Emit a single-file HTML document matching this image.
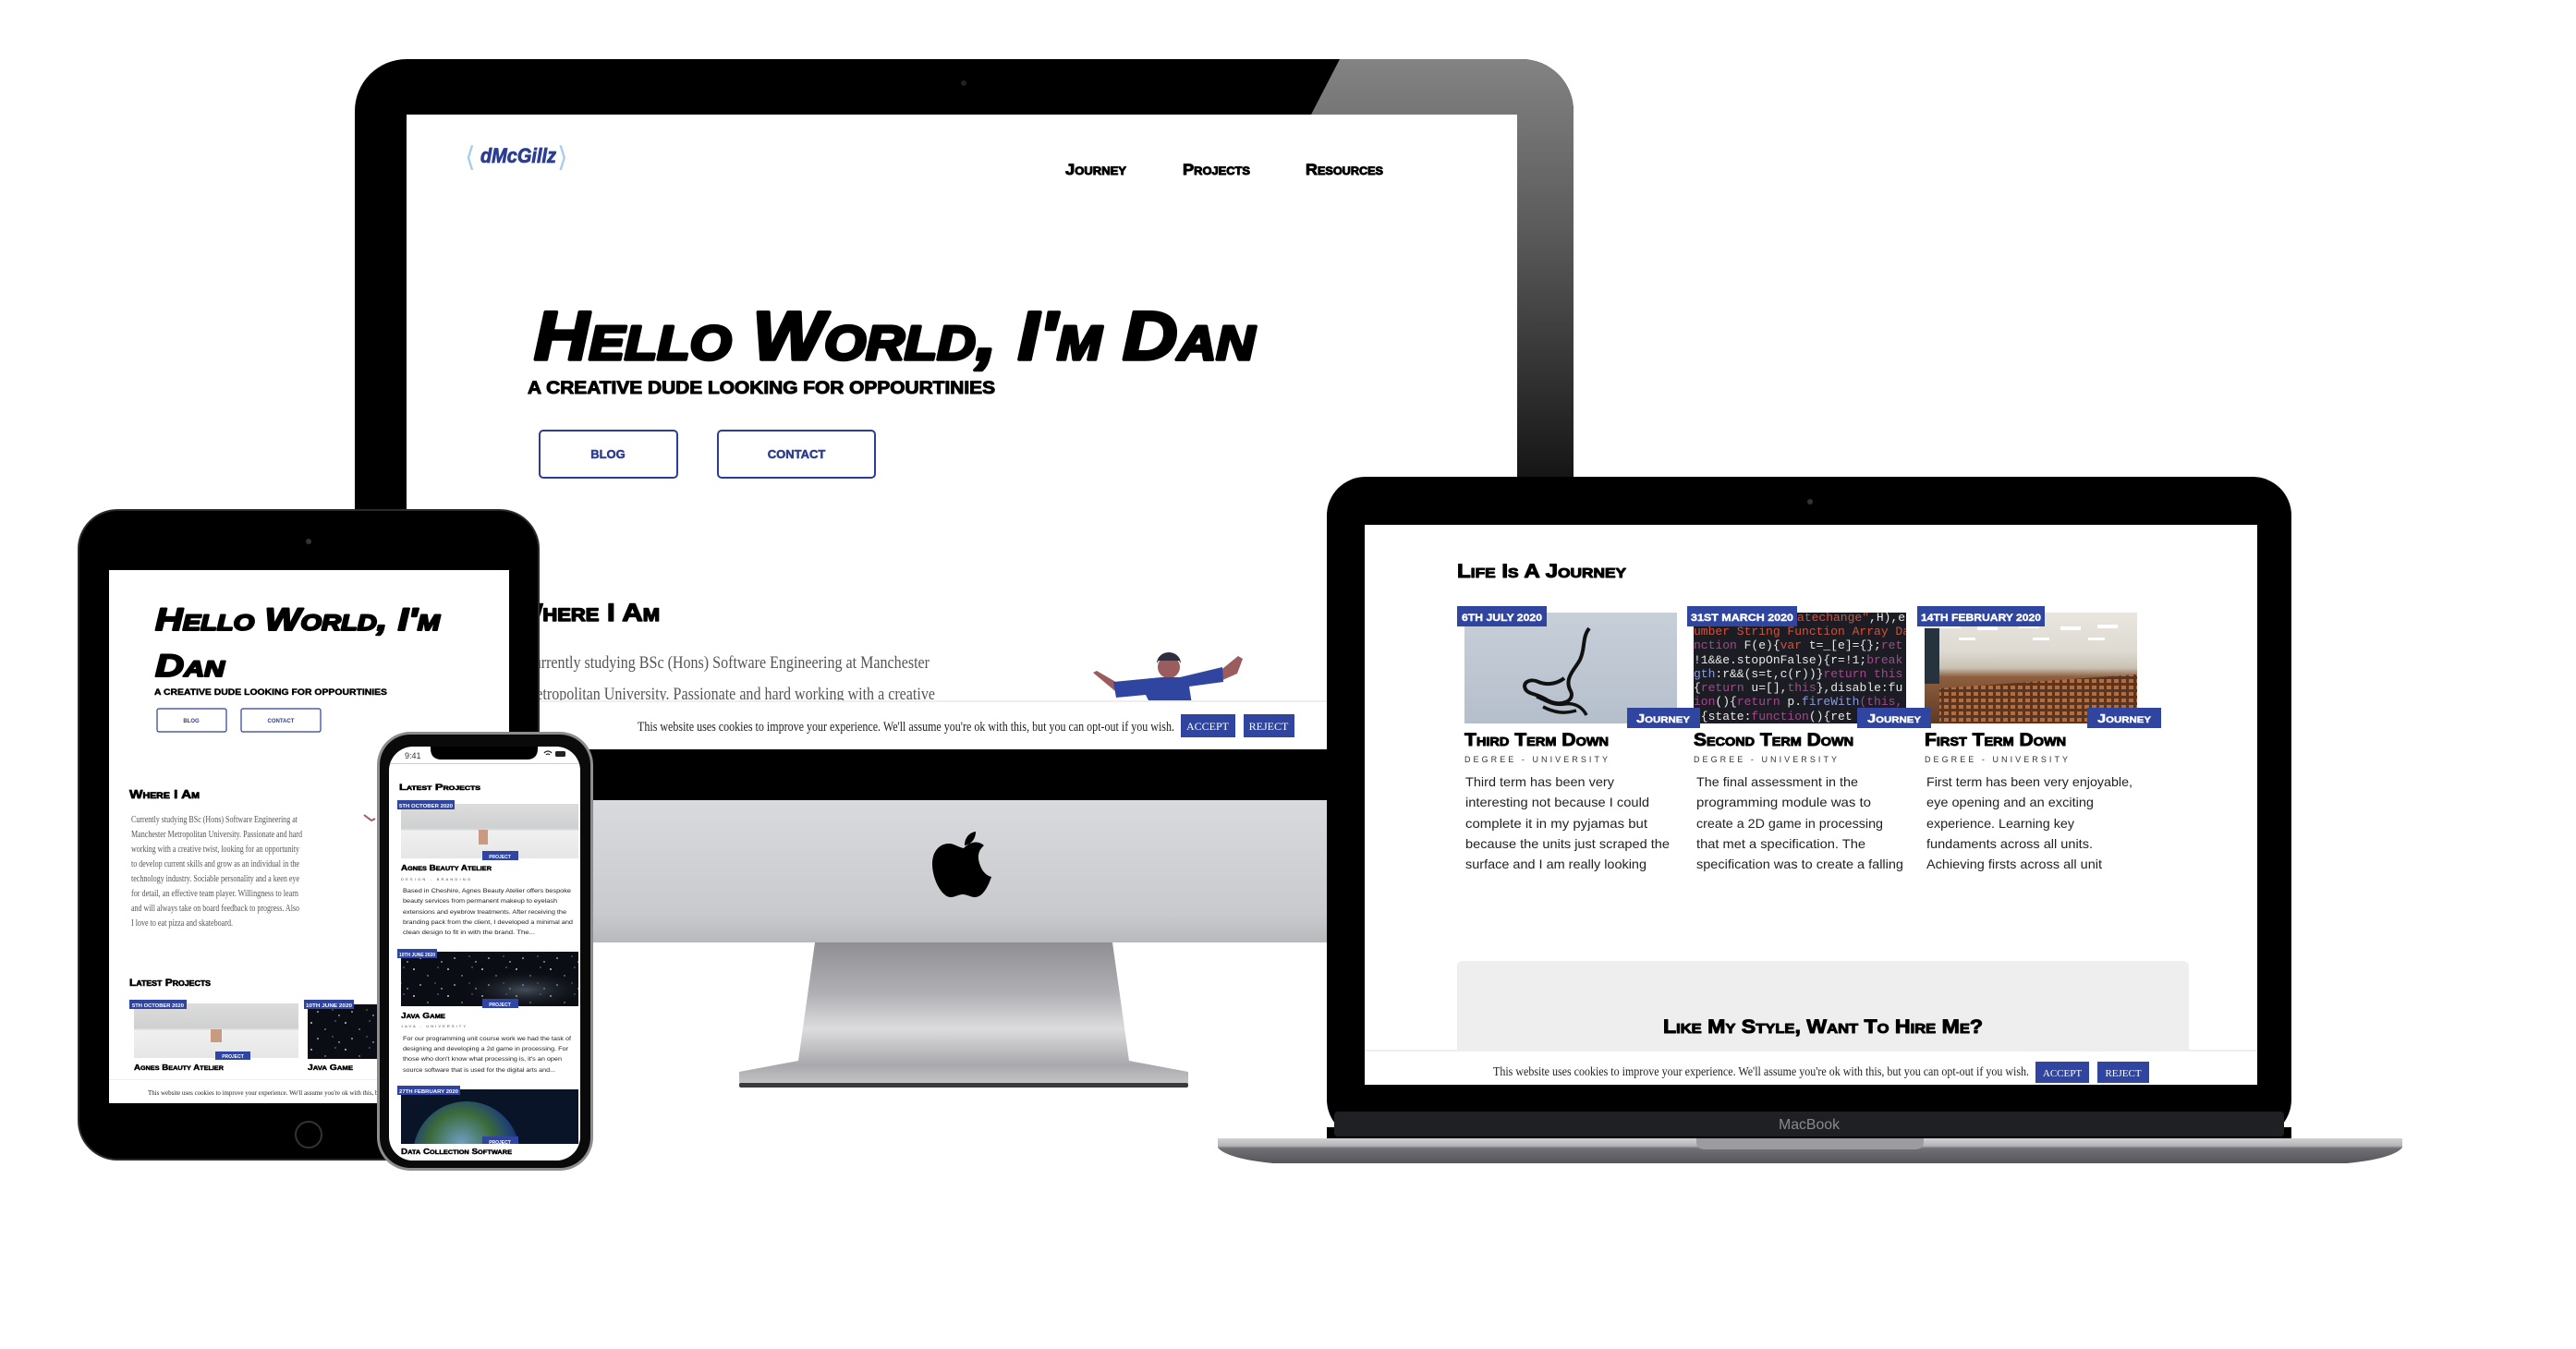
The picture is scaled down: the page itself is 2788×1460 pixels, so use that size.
<!DOCTYPE html>
<html><head><meta charset="utf-8"><style>
html,body{margin:0;padding:0;background:#fff;}
svg{display:block;}
text{font-family:"Liberation Sans",sans-serif;}
.h{font-weight:bold;font-variant:small-caps;}
.k{stroke:#000;stroke-linejoin:round;}
.w{stroke:#fff;stroke-width:0.4px;}
.serif{font-family:"Liberation Serif",serif;}
.mono{font-family:"Liberation Mono",monospace;}
</style></head><body>
<svg width="2788" height="1460" viewBox="0 0 2788 1460" xmlns="http://www.w3.org/2000/svg">
<defs>
  <linearGradient id="glare" gradientUnits="userSpaceOnUse" x1="0" y1="64" x2="0" y2="600">
    <stop offset="0" stop-color="#838383"/><stop offset="0.35" stop-color="#5a5a5a"/><stop offset="1" stop-color="#000"/>
  </linearGradient>
  <linearGradient id="chin" x1="0" y1="0" x2="0" y2="1">
    <stop offset="0" stop-color="#d9dadd"/><stop offset="0.8" stop-color="#c9cacd"/><stop offset="1" stop-color="#b8b9bc"/>
  </linearGradient>
  <linearGradient id="stand" x1="0" y1="0" x2="0" y2="1">
    <stop offset="0" stop-color="#8f8f94"/><stop offset="0.35" stop-color="#b0b0b4"/><stop offset="0.6" stop-color="#dcdcde"/><stop offset="0.85" stop-color="#a9a9ad"/><stop offset="1" stop-color="#c8c8ca"/>
  </linearGradient>
  <linearGradient id="base" x1="0" y1="0" x2="0" y2="1">
    <stop offset="0" stop-color="#d2d2d5"/><stop offset="0.3" stop-color="#b4b4b8"/><stop offset="0.4" stop-color="#707075"/><stop offset="1" stop-color="#55555a"/>
  </linearGradient>
  <linearGradient id="wall" x1="0" y1="0" x2="0" y2="1">
    <stop offset="0" stop-color="#c7cfd9"/><stop offset="1" stop-color="#b5bfcb"/>
  </linearGradient>
  <linearGradient id="hall" x1="0" y1="0" x2="0" y2="1">
    <stop offset="0" stop-color="#e9e6df"/><stop offset="0.35" stop-color="#dedad2"/><stop offset="0.5" stop-color="#c9c2b4"/><stop offset="0.58" stop-color="#8e5f3e"/><stop offset="1" stop-color="#5e3a24"/>
  </linearGradient>
  <linearGradient id="room" x1="0" y1="0" x2="0" y2="1">
    <stop offset="0" stop-color="#dcdcdc"/><stop offset="0.45" stop-color="#cfd0d1"/><stop offset="0.5" stop-color="#f0f0f0"/><stop offset="1" stop-color="#e6e6e6"/>
  </linearGradient>
  <pattern id="stars" width="37" height="29" patternUnits="userSpaceOnUse">
    <rect width="37" height="29" fill="#0b0d14"/>
    <circle cx="4" cy="5" r="0.9" fill="#fff"/><circle cx="19" cy="12" r="0.7" fill="#e9c98a"/>
    <circle cx="30" cy="3" r="0.6" fill="#9fc4ff"/><circle cx="11" cy="22" r="0.8" fill="#fff"/>
    <circle cx="27" cy="20" r="0.6" fill="#f0a060"/><circle cx="34" cy="26" r="0.7" fill="#fff"/>
  </pattern>
  <pattern id="seats" width="8" height="7" patternUnits="userSpaceOnUse">
    <rect width="8" height="7" fill="#5a3522"/><rect width="5" height="4" fill="#b06e42"/>
  </pattern>
  <radialGradient id="earth" cx="0.45" cy="0.4" r="0.6">
    <stop offset="0" stop-color="#6fa0c8"/><stop offset="0.5" stop-color="#3b6b3a"/><stop offset="0.8" stop-color="#1d3e78"/><stop offset="1" stop-color="#0c1b3c"/>
  </radialGradient>
  <radialGradient id="neb" cx="0.7" cy="0.7" r="0.4">
    <stop offset="0" stop-color="#6a7a8a" stop-opacity="0.6"/><stop offset="1" stop-color="#000" stop-opacity="0"/>
  </radialGradient>
  <clipPath id="imacClip"><rect x="384" y="64" width="1319" height="802" rx="56"/></clipPath>
  <clipPath id="imacScreen"><rect x="440" y="124" width="1202" height="687"/></clipPath>
  <clipPath id="lapScreen"><rect x="1477" y="568" width="966" height="606"/></clipPath>
  <clipPath id="tabScreen"><rect x="118" y="617" width="433" height="577"/></clipPath>
  <clipPath id="phScreen"><rect x="421" y="808" width="207" height="448" rx="26"/></clipPath>
  <clipPath id="c2"><rect x="1833" y="663" width="230" height="120"/></clipPath>
  <clipPath id="c3"><rect x="2083" y="663" width="230" height="120"/></clipPath>
</defs>

<!-- ================= iMAC ================= -->
<g clip-path="url(#imacClip)">
  <rect x="384" y="64" width="1319" height="802" fill="#000"/>
  <polygon points="1450,64 1703,64 1703,866 1642,866 1642,124 1419,124" fill="url(#glare)"/>
</g>
<circle cx="1043" cy="90" r="3" fill="#222"/>
<rect x="384" y="866" width="1319" height="154" fill="url(#chin)"/>
<path d="M1043,918 c8,-8 16,-8 22,-3 c-6,5 -8,12 -4,22 c3,8 8,11 12,12 c-4,12 -10,22 -18,22 c-5,0 -8,-3 -13,-3 c-5,0 -8,3 -13,3 c-10,0 -20,-20 -20,-36 c0,-14 8,-22 18,-22 c6,0 10,4 16,5 z M1044,915 c0,-8 5,-14 12,-15 c0,8 -5,14 -12,15 z" fill="#000"/>
<polygon points="882,1020 1204,1020 1222,1148 1286,1160 1286,1176 800,1176 800,1160 864,1148" fill="url(#stand)"/>
<rect x="800" y="1172" width="486" height="5" rx="2" fill="#3a3a3c"/>

<rect x="440" y="124" width="1202" height="687" fill="#fff"/>
<g clip-path="url(#imacScreen)">
  <text x="503" y="180" font-size="30" fill="#a9cdef">&#10216;</text>
  <text x="520" y="176" font-size="22" font-weight="bold" font-style="italic" fill="#2b3d94" stroke="#2b3d94" stroke-width="0.8" textLength="82" lengthAdjust="spacingAndGlyphs">dMcGillz</text>
  <text x="603" y="180" font-size="30" fill="#a9cdef">&#10217;</text>
  <text class="h k" stroke-width="0.9" x="1153" y="189" font-size="17" textLength="66" lengthAdjust="spacingAndGlyphs">Journey</text>
  <text class="h k" stroke-width="0.9" x="1280" y="189" font-size="17" textLength="73" lengthAdjust="spacingAndGlyphs">Projects</text>
  <text class="h k" stroke-width="0.9" x="1413" y="189" font-size="17" textLength="84" lengthAdjust="spacingAndGlyphs">Resources</text>
  <text class="h k" stroke-width="3.5" x="578" y="389" font-size="74" font-style="italic" textLength="780" lengthAdjust="spacingAndGlyphs">Hello World, I'm Dan</text>
  <text class="k" stroke-width="1" x="571" y="426" font-size="19" font-weight="bold" textLength="506" lengthAdjust="spacingAndGlyphs">A CREATIVE DUDE LOOKING FOR OPPOURTINIES</text>
  <rect x="584" y="466" width="149" height="51" rx="4" fill="none" stroke="#2b3d94" stroke-width="2"/>
  <text x="658" y="496" font-size="13" font-weight="bold" fill="#2b3d94" stroke="#2b3d94" stroke-width="0.5" text-anchor="middle">BLOG</text>
  <rect x="777" y="466" width="170" height="51" rx="4" fill="none" stroke="#2b3d94" stroke-width="2"/>
  <text x="862" y="496" font-size="13" font-weight="bold" fill="#2b3d94" stroke="#2b3d94" stroke-width="0.5" text-anchor="middle">CONTACT</text>
  <text class="h k" stroke-width="1.4" x="558" y="672" font-size="27" textLength="156" lengthAdjust="spacingAndGlyphs">Where I Am</text>
  <text class="serif" x="567" y="723" font-size="19" fill="#555" textLength="439" lengthAdjust="spacingAndGlyphs">Currently studying BSc (Hons) Software Engineering at Manchester</text>
  <text class="serif" x="566" y="757" font-size="19" fill="#555" textLength="446" lengthAdjust="spacingAndGlyphs">Metropolitan University. Passionate and hard working with a creative</text>
  <path d="M1183,728 l4,-2 l24,14 l-4,8 z" fill="#9a5c5c"/>
  <path d="M1318,728 l22,-18 l5,3 l-6,16 l-18,8 z" fill="#9a5c5c"/>
  <circle cx="1265" cy="722" r="12" fill="#9a5c5c"/>
  <path d="M1252,718 a13,12 0 0 1 26,0 l-2,-3 l-22,0 z" fill="#2e2e3e"/>
  <polygon points="1205,738 1257,733 1277,733 1323,722 1324,738 1287,743 1290,762 1245,762 1240,752 1208,755" fill="#2f45a0"/>
  <rect x="440" y="759" width="1202" height="52" fill="#fff"/>
  <rect x="440" y="758" width="1202" height="2" fill="#eee"/>
  <text class="serif" x="690" y="791" font-size="15" fill="#222" textLength="581" lengthAdjust="spacingAndGlyphs">This website uses cookies to improve your experience. We'll assume you're ok with this, but you can opt-out if you wish.</text>
  <rect x="1278" y="773" width="59" height="25" fill="#2f45a0"/>
  <text class="serif" x="1307" y="790" font-size="12" fill="#fff" text-anchor="middle">ACCEPT</text>
  <rect x="1346" y="773" width="55" height="25" fill="#2f45a0"/>
  <text class="serif" x="1373" y="790" font-size="12" fill="#fff" text-anchor="middle">REJECT</text>
</g>

<!-- ================= LAPTOP ================= -->
<path d="M1318,1232 L2600,1232 L2600,1242 Q2590,1254 2540,1259 L1378,1259 Q1328,1254 1318,1242 Z" fill="url(#base)"/>
<path d="M1836,1232 h246 v4 q0,8 -10,8 h-226 q-10,0 -10,-8 z" fill="#9c9ca0"/>
<rect x="1436" y="516" width="1044" height="716" rx="42" fill="#000"/>
<rect x="1436" y="1220" width="1044" height="12" fill="#000"/>
<rect x="1444" y="1203" width="1028" height="27" rx="4" fill="#1f2024"/>
<text x="1958" y="1222" font-size="16" fill="#8a8a8e" text-anchor="middle" textLength="66" lengthAdjust="spacingAndGlyphs">MacBook</text>
<circle cx="1959" cy="543" r="3" fill="#333"/>
<rect x="1477" y="568" width="966" height="606" fill="#fff"/>
<g clip-path="url(#lapScreen)">
  <text class="h k" stroke-width="1" x="1577" y="625" font-size="21" textLength="183" lengthAdjust="spacingAndGlyphs">Life Is A Journey</text>
  <rect x="1585" y="663" width="230" height="120" fill="url(#wall)"/>
  <path d="M1720,680 c-8,10 -4,22 -10,34 c-5,10 -18,20 -10,34 c5,10 -10,18 -25,10 c-12,-8 -20,-6 -24,-12 c-4,-8 6,-12 14,-8 c10,4 20,2 28,-4" fill="none" stroke="#111" stroke-width="4"/>
  <path d="M1663,754 c10,4 18,10 30,8 c12,-2 20,4 24,12 M1670,765 c12,6 22,8 36,4" fill="none" stroke="#111" stroke-width="3.5"/>
  <rect x="1833" y="663" width="230" height="120" fill="#1c1d24"/>
  <g clip-path="url(#c2)" font-size="13">
    <text x="1945" y="672" class="mono" fill="#d0523a">atechange"<tspan fill="#e8e8e8">,H),e.</tspan></text>
    <text x="1833" y="687" class="mono" fill="#d0523a">umber String Function Array Da</text>
    <text x="1833" y="702" class="mono" fill="#a04a8a">nction <tspan fill="#e8e8e8">F(e){</tspan><tspan fill="#d0523a">var</tspan><tspan fill="#e8e8e8"> t=_[e]={};</tspan>ret</text>
    <text x="1833" y="718" class="mono" fill="#e8e8e8">!1&amp;&amp;e.stopOnFalse){r=!1;<tspan fill="#a04a8a">break</tspan></text>
    <text x="1833" y="733" class="mono" fill="#8a9ad8">gth<tspan fill="#e8e8e8">:r&amp;&amp;(s=t,c(r))}</tspan><tspan fill="#a04a8a">return this</tspan></text>
    <text x="1833" y="748" class="mono" fill="#e8e8e8">{<tspan fill="#a04a8a">return</tspan> u=[],<tspan fill="#a04a8a">this</tspan>},disable:fu</text>
    <text x="1833" y="763" class="mono" fill="#a04a8a">ion<tspan fill="#e8e8e8">(){</tspan>return<tspan fill="#e8e8e8"> p.</tspan><tspan fill="#8a9ad8">fireWith</tspan>(this,</text>
    <text x="1833" y="779" class="mono" fill="#e8e8e8">={state:<tspan fill="#a04a8a">function</tspan>(){ret</text>
  </g>
  <g clip-path="url(#c3)">
  <rect x="2083" y="663" width="230" height="120" fill="url(#hall)"/>
  <g fill="#fff"><rect x="2100" y="676" width="22" height="4"/><rect x="2140" y="678" width="22" height="4"/><rect x="2185" y="676" width="22" height="4"/><rect x="2230" y="678" width="22" height="4"/><rect x="2270" y="676" width="22" height="4"/><rect x="2120" y="690" width="18" height="3"/><rect x="2200" y="690" width="18" height="3"/><rect x="2260" y="690" width="18" height="3"/></g>
  <rect x="2083" y="680" width="16" height="60" fill="#26323e"/>
  <polygon points="2099,745 2313,730 2313,783 2099,783" fill="url(#seats)"/>
  </g>
  <rect x="1577" y="656" width="97" height="22" fill="#2f45a0"/>
  <text class="w" x="1582" y="672" font-size="11" font-weight="bold" fill="#fff" textLength="87" lengthAdjust="spacingAndGlyphs">6TH JULY 2020</text>
  <rect x="1826" y="656" width="119" height="22" fill="#2f45a0"/>
  <text class="w" x="1830" y="672" font-size="11" font-weight="bold" fill="#fff" textLength="111" lengthAdjust="spacingAndGlyphs">31ST MARCH 2020</text>
  <rect x="2075" y="656" width="138" height="22" fill="#2f45a0"/>
  <text class="w" x="2079" y="672" font-size="11" font-weight="bold" fill="#fff" textLength="130" lengthAdjust="spacingAndGlyphs">14TH FEBRUARY 2020</text>
  <rect x="1761" y="766" width="79" height="22" fill="#2f45a0"/>
  <text class="h w" x="1800" y="782" font-size="13" fill="#fff" text-anchor="middle" textLength="58" lengthAdjust="spacingAndGlyphs">Journey</text>
  <rect x="2010" y="766" width="80" height="22" fill="#2f45a0"/>
  <text class="h w" x="2050" y="782" font-size="13" fill="#fff" text-anchor="middle" textLength="58" lengthAdjust="spacingAndGlyphs">Journey</text>
  <rect x="2259" y="766" width="80" height="22" fill="#2f45a0"/>
  <text class="h w" x="2299" y="782" font-size="13" fill="#fff" text-anchor="middle" textLength="58" lengthAdjust="spacingAndGlyphs">Journey</text>
  <text class="h k" stroke-width="0.9" x="1585" y="807" font-size="19" textLength="156" lengthAdjust="spacingAndGlyphs">Third Term Down</text>
  <text class="h k" stroke-width="0.9" x="1833" y="807" font-size="19" textLength="173" lengthAdjust="spacingAndGlyphs">Second Term Down</text>
  <text class="h k" stroke-width="0.9" x="2083" y="807" font-size="19" textLength="153" lengthAdjust="spacingAndGlyphs">First Term Down</text>
  <g font-size="9" fill="#333">
    <text x="1585" y="825" textLength="155" lengthAdjust="spacing">DEGREE - UNIVERSITY</text>
    <text x="1833" y="825" textLength="155" lengthAdjust="spacing">DEGREE - UNIVERSITY</text>
    <text x="2083" y="825" textLength="155" lengthAdjust="spacing">DEGREE - UNIVERSITY</text>
  </g>
  <g font-size="14" fill="#222">
    <text x="1586" y="851" textLength="161" lengthAdjust="spacingAndGlyphs">Third term has been very</text>
    <text x="1586" y="873" textLength="199" lengthAdjust="spacingAndGlyphs">interesting not because I could</text>
    <text x="1586" y="896" textLength="197" lengthAdjust="spacingAndGlyphs">complete it in my pyjamas but</text>
    <text x="1586" y="918" textLength="221" lengthAdjust="spacingAndGlyphs">because the units just scraped the</text>
    <text x="1586" y="940" textLength="196" lengthAdjust="spacingAndGlyphs">surface and I am really looking</text>
    <text x="1836" y="851" textLength="175" lengthAdjust="spacingAndGlyphs">The final assessment in the</text>
    <text x="1836" y="873" textLength="189" lengthAdjust="spacingAndGlyphs">programming module was to</text>
    <text x="1836" y="896" textLength="202" lengthAdjust="spacingAndGlyphs">create a 2D game in processing</text>
    <text x="1836" y="918" textLength="183" lengthAdjust="spacingAndGlyphs">that met a specification. The</text>
    <text x="1836" y="940" textLength="224" lengthAdjust="spacingAndGlyphs">specification was to create a falling</text>
    <text x="2085" y="851" textLength="223" lengthAdjust="spacingAndGlyphs">First term has been very enjoyable,</text>
    <text x="2085" y="873" textLength="181" lengthAdjust="spacingAndGlyphs">eye opening and an exciting</text>
    <text x="2085" y="896" textLength="160" lengthAdjust="spacingAndGlyphs">experience. Learning key</text>
    <text x="2085" y="918" textLength="180" lengthAdjust="spacingAndGlyphs">fundaments across all units.</text>
    <text x="2085" y="940" textLength="190" lengthAdjust="spacingAndGlyphs">Achieving firsts across all unit</text>
  </g>
  <rect x="1577" y="1040" width="792" height="110" rx="6" fill="#eeeeee"/>
  <text class="h k" stroke-width="1" x="1800" y="1118" font-size="21" textLength="346" lengthAdjust="spacingAndGlyphs">Like My Style, Want To Hire Me?</text>
  <rect x="1477" y="1137" width="966" height="37" fill="#fff"/>
  <rect x="1477" y="1136" width="966" height="2" fill="#eee"/>
  <text class="serif" x="1616" y="1164" font-size="14" fill="#222" textLength="580" lengthAdjust="spacingAndGlyphs">This website uses cookies to improve your experience. We'll assume you're ok with this, but you can opt-out if you wish.</text>
  <rect x="2203" y="1149" width="58" height="23" fill="#2f45a0"/>
  <text class="serif" x="2232" y="1165" font-size="11" fill="#fff" text-anchor="middle">ACCEPT</text>
  <rect x="2270" y="1149" width="56" height="23" fill="#2f45a0"/>
  <text class="serif" x="2298" y="1165" font-size="11" fill="#fff" text-anchor="middle">REJECT</text>
</g>

<!-- ================= TABLET ================= -->
<rect x="85" y="552" width="498" height="703" rx="42" fill="#000" stroke="#2a2a2a" stroke-width="2"/>
<circle cx="334" cy="586" r="3" fill="#333"/>
<circle cx="334" cy="1228" r="14" fill="none" stroke="#333" stroke-width="2"/>
<rect x="118" y="617" width="433" height="577" fill="#fff"/>
<g clip-path="url(#tabScreen)">
  <text class="h k" stroke-width="2" x="168" y="682" font-size="34" font-style="italic" textLength="308" lengthAdjust="spacingAndGlyphs">Hello World, I'm</text>
  <text class="h k" stroke-width="2" x="168" y="732" font-size="34" font-style="italic" textLength="75" lengthAdjust="spacingAndGlyphs">Dan</text>
  <text class="k" stroke-width="0.4" x="167" y="752" font-size="9" font-weight="bold" textLength="252" lengthAdjust="spacingAndGlyphs">A CREATIVE DUDE LOOKING FOR OPPOURTINIES</text>
  <rect x="170" y="767" width="75" height="25" rx="2" fill="none" stroke="#2b3d94" stroke-width="1.2"/>
  <text x="207" y="782" font-size="6" font-weight="bold" fill="#2b3d94" text-anchor="middle">BLOG</text>
  <rect x="261" y="767" width="86" height="25" rx="2" fill="none" stroke="#2b3d94" stroke-width="1.2"/>
  <text x="304" y="782" font-size="6" font-weight="bold" fill="#2b3d94" text-anchor="middle">CONTACT</text>
  <text class="h k" stroke-width="0.7" x="140" y="864" font-size="13" textLength="76" lengthAdjust="spacingAndGlyphs">Where I Am</text>
  <g font-size="10" fill="#555">
    <text class="serif" x="142" y="890" textLength="180" lengthAdjust="spacingAndGlyphs">Currently studying BSc (Hons) Software Engineering at</text>
    <text class="serif" x="142" y="906" textLength="185" lengthAdjust="spacingAndGlyphs">Manchester Metropolitan University. Passionate and hard</text>
    <text class="serif" x="142" y="922" textLength="182" lengthAdjust="spacingAndGlyphs">working with a creative twist, looking for an opportunity</text>
    <text class="serif" x="142" y="938" textLength="182" lengthAdjust="spacingAndGlyphs">to develop current skills and grow as an individual in the</text>
    <text class="serif" x="142" y="954" textLength="182" lengthAdjust="spacingAndGlyphs">technology industry. Sociable personality and a keen eye</text>
    <text class="serif" x="142" y="970" textLength="181" lengthAdjust="spacingAndGlyphs">for detail, an effective team player. Willingness to learn</text>
    <text class="serif" x="142" y="986" textLength="182" lengthAdjust="spacingAndGlyphs">and will always take on board feedback to progress. Also</text>
    <text class="serif" x="142" y="1002" textLength="110" lengthAdjust="spacingAndGlyphs">I love to eat pizza and skateboard.</text>
  </g>
  <path d="M394,882 l8,6 l4,-2" stroke="#9a5c5c" stroke-width="2" fill="none"/>
  <text class="h k" stroke-width="0.6" x="140" y="1067" font-size="11" textLength="88" lengthAdjust="spacingAndGlyphs">Latest Projects</text>
  <rect x="145" y="1086" width="178" height="59" fill="url(#room)"/>
  <rect x="228" y="1114" width="12" height="14" fill="#c89a80"/>
  <rect x="140" y="1082" width="62" height="10" fill="#2f45a0"/>
  <text x="143" y="1090" font-size="5.5" font-weight="bold" fill="#fff" textLength="56" lengthAdjust="spacingAndGlyphs">5TH OCTOBER 2020</text>
  <rect x="233" y="1138" width="38" height="9" fill="#2f45a0"/>
  <text x="252" y="1145" font-size="5" font-weight="bold" fill="#fff" text-anchor="middle">PROJECT</text>
  <rect x="333" y="1087" width="100" height="59" fill="url(#stars)"/>
  <rect x="329" y="1082" width="54" height="10" fill="#2f45a0"/>
  <text x="331" y="1090" font-size="5.5" font-weight="bold" fill="#fff" textLength="50" lengthAdjust="spacingAndGlyphs">10TH JUNE 2020</text>
  <text class="h k" stroke-width="0.4" x="145" y="1158" font-size="8" textLength="97" lengthAdjust="spacingAndGlyphs">Agnes Beauty Atelier</text>
  <text class="h k" stroke-width="0.4" x="333" y="1158" font-size="8" textLength="49" lengthAdjust="spacingAndGlyphs">Java Game</text>
  <rect x="118" y="1169" width="433" height="25" fill="#fff"/>
  <rect x="118" y="1168" width="433" height="1" fill="#eee"/>
  <text class="serif" x="160" y="1185" font-size="7" fill="#222" textLength="300" lengthAdjust="spacingAndGlyphs">This website uses cookies to improve your experience. We'll assume you're ok with this, but you can opt-out</text>
</g>

<!-- ================= PHONE ================= -->
<rect x="408" y="792" width="234" height="475" rx="36" fill="#8d8d90"/>
<rect x="411" y="795" width="228" height="469" rx="33" fill="#0a0a0a"/>
<rect x="421" y="808" width="207" height="448" rx="26" fill="#fff"/>
<g clip-path="url(#phScreen)">
  <path d="M466,808 h116 v2 q0,12 -12,12 h-92 q-12,0 -12,-12 z" fill="#000"/>
  <text x="438" y="821" font-size="9" fill="#333">9:41</text>
  <path d="M589,815 a5,5 0 0 1 8,0 M591,817 a2.5,2.5 0 0 1 4,0" stroke="#222" stroke-width="1.3" fill="none"/>
  <rect x="601" y="813" width="11" height="6" rx="1.5" fill="#222"/>
  <rect x="421" y="826" width="207" height="1" fill="#ccc"/>
  <text class="h k" stroke-width="0.5" x="432" y="855" font-size="9" textLength="88" lengthAdjust="spacingAndGlyphs">Latest Projects</text>
  <rect x="434" y="870" width="192" height="59" fill="url(#room)"/>
  <rect x="518" y="898" width="10" height="16" fill="#c89a80"/>
  <rect x="430" y="866" width="62" height="10" fill="#2f45a0"/>
  <text x="432" y="874" font-size="5.5" font-weight="bold" fill="#fff" textLength="58" lengthAdjust="spacingAndGlyphs">5TH OCTOBER 2020</text>
  <rect x="522" y="921" width="39" height="10" fill="#2f45a0"/>
  <text x="541" y="929" font-size="5" font-weight="bold" fill="#fff" text-anchor="middle">PROJECT</text>
  <text class="h k" stroke-width="0.4" x="434" y="942" font-size="8" textLength="98" lengthAdjust="spacingAndGlyphs">Agnes Beauty Atelier</text>
  <text x="434" y="953" font-size="4" fill="#444" textLength="75" lengthAdjust="spacing">DESIGN - BRANDING</text>
  <g font-size="6" fill="#222">
    <text x="436" y="966" textLength="182" lengthAdjust="spacingAndGlyphs">Based in Cheshire, Agnes Beauty Atelier offers bespoke</text>
    <text x="436" y="977" textLength="167" lengthAdjust="spacingAndGlyphs">beauty services from permanent makeup to eyelash</text>
    <text x="436" y="989" textLength="177" lengthAdjust="spacingAndGlyphs">extensions and eyebrow treatments. After receiving the</text>
    <text x="436" y="1000" textLength="184" lengthAdjust="spacingAndGlyphs">branding pack from the client, I developed a minimal and</text>
    <text x="436" y="1011" textLength="143" lengthAdjust="spacingAndGlyphs">clean design to fit in with the brand. The...</text>
  </g>
  <rect x="434" y="1030" width="192" height="59" fill="url(#stars)"/>
  <rect x="434" y="1030" width="192" height="59" fill="url(#neb)"/>
  <rect x="430" y="1027" width="43" height="10" fill="#2f45a0"/>
  <text x="432" y="1035" font-size="5.5" font-weight="bold" fill="#fff" textLength="39" lengthAdjust="spacingAndGlyphs">10TH JUNE 2020</text>
  <rect x="522" y="1081" width="39" height="10" fill="#2f45a0"/>
  <text x="541" y="1089" font-size="5" font-weight="bold" fill="#fff" text-anchor="middle">PROJECT</text>
  <text class="h k" stroke-width="0.4" x="434" y="1102" font-size="8" textLength="48" lengthAdjust="spacingAndGlyphs">Java Game</text>
  <text x="434" y="1112" font-size="4" fill="#444" textLength="70" lengthAdjust="spacing">JAVA - UNIVERSITY</text>
  <g font-size="6" fill="#222">
    <text x="436" y="1126" textLength="182" lengthAdjust="spacingAndGlyphs">For our programming unit course work we had the task of</text>
    <text x="436" y="1137" textLength="179" lengthAdjust="spacingAndGlyphs">designing and developing a 2d game in processing. For</text>
    <text x="436" y="1148" textLength="172" lengthAdjust="spacingAndGlyphs">those who don't know what processing is, it's an open</text>
    <text x="436" y="1160" textLength="165" lengthAdjust="spacingAndGlyphs">source software that is used for the digital arts and...</text>
  </g>
  <rect x="434" y="1179" width="192" height="59" fill="#0a1428"/>
  <circle cx="505" cy="1250" r="58" fill="url(#earth)"/>
  <rect x="430" y="1175" width="68" height="10" fill="#2f45a0"/>
  <text x="432" y="1183" font-size="5.5" font-weight="bold" fill="#fff" textLength="64" lengthAdjust="spacingAndGlyphs">27TH FEBRUARY 2020</text>
  <rect x="522" y="1230" width="39" height="10" fill="#2f45a0"/>
  <text x="541" y="1238" font-size="5" font-weight="bold" fill="#fff" text-anchor="middle">PROJECT</text>
  <rect x="421" y="1238" width="207" height="20" fill="#fff"/>
  <text class="h k" stroke-width="0.4" x="434" y="1249" font-size="8" textLength="120" lengthAdjust="spacingAndGlyphs">Data Collection Software</text>
</g>
</svg>
</body></html>
